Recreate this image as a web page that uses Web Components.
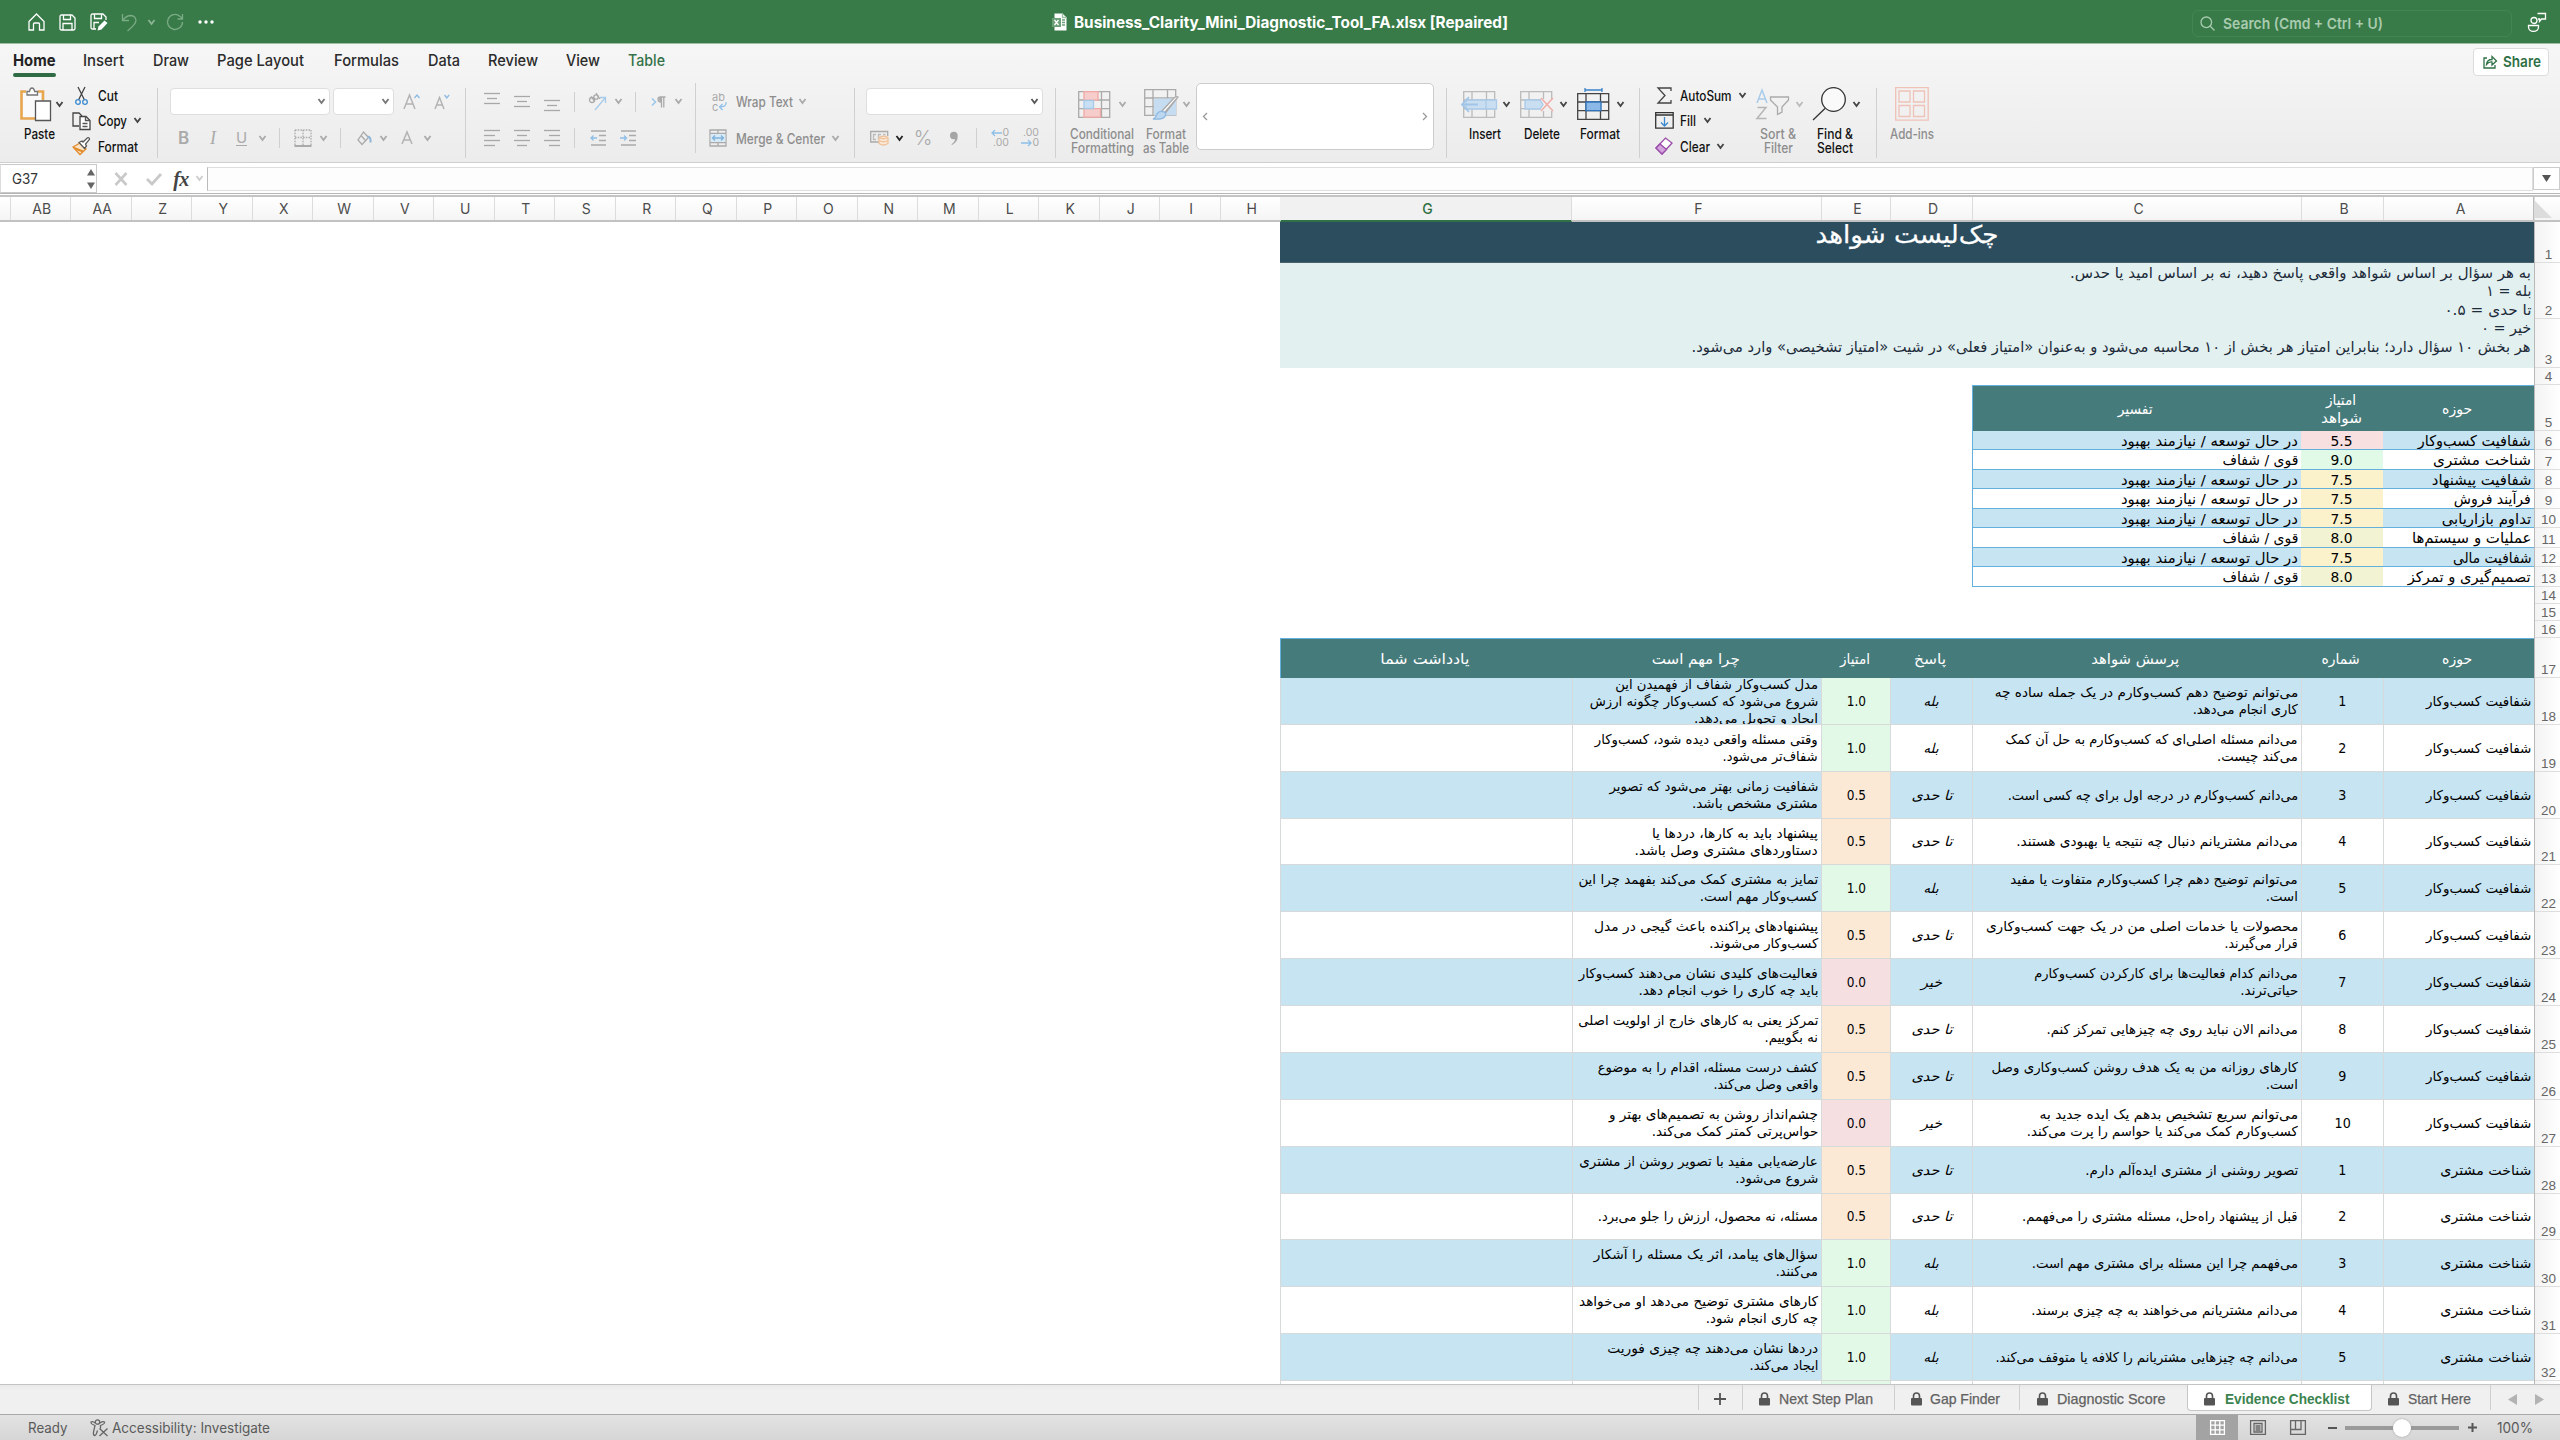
<!DOCTYPE html>
<html lang="fa">
<head>
<meta charset="utf-8">
<title>Business_Clarity_Mini_Diagnostic_Tool_FA.xlsx</title>
<style>
	html, body {
		margin: 0;
		padding: 0;
	}
	body {
		width: 2560px;
		height: 1440px;
		overflow: hidden;
		background: #fff;
		font-family: Inter, "Liberation Sans", sans-serif;
	}
</style>
</head>
<body>
<xl-app></xl-app>
<script>
/* ---------- helpers ---------- */

// text squeezed or stretched to a known width
const t = ( text, w, cls = '' ) => `<fit-text w="${w}" class="${cls}">${text}</fit-text>`

const svg = ( w, h, body, attrs = '' ) =>
	`<svg width="${w}" height="${h}" viewBox="0 0 ${w} ${h}" fill="none" stroke-width="1.3" ${attrs}>${body}</svg>`

const chev = ( color = '#444' ) => svg( 9, 7, `<path d="M1.500 1 4.500 5 7.500 1" stroke="${color}" stroke-width="1.8"/>` )

// horizontal flex row, items are [ left, width, markup ]
const run = ( start, height, items ) => {
	let x = start
	const cells = items.map( ( [ left, w, html ] ) => {
		const cell = `<div class="cell" style="margin-left:${( left - x ).toFixed( 1 )}px;width:${w}px">${html}</div>`
		x = left + w
		return cell
	} )
	return `<div class="run" style="height:${height}px">${cells.join( '' )}</div>`
}

const RUN_CSS = `
	.run { display: flex; align-items: center; }
	.cell { flex: none; display: flex; align-items: center; justify-content: center; }
	svg { display: block; flex: none; overflow: visible; }
`

class FitText extends HTMLElement {
	constructor() {
		super()
		this.attachShadow( { mode: 'open' } )
		this.shadowRoot.innerHTML = `
			<style>
				:host { display: inline-block; white-space: nowrap; flex: none; text-align: start; }
				span { display: inline-block; transform-origin: 0 50%; }
			</style>
			<span><slot></slot></span>
		`
	}

	connectedCallback() {
		const span = this.shadowRoot.querySelector( 'span' )
		const w = parseFloat( this.getAttribute( 'w' ) )
		const natural = span.getBoundingClientRect().width
		this.style.width = w + 'px'
		if ( 'rtl' === getComputedStyle( this ).direction ) {
			span.style.transformOrigin = '100% 50%'
		}
		if ( natural ) {
			span.style.transform = `scaleX(${w / natural})`
		}
	}
}
customElements.define( 'fit-text', FitText )

/* ---------- title bar ---------- */

class XlTitlebar extends HTMLElement {
	connectedCallback() {
		const root = this.attachShadow( { mode: 'open' } )
		const save = '<path d="M1 2.5Q1 1 2.5 1H13l3 3v10.500q0 1.500-1.500 1.500h-12Q1 16 1 14.500zM4.500 1v4.500h7V1M4 16V9.500h9V16"/>'
		root.innerHTML = `
			<style>
				${RUN_CSS}
				:host { display: block; height: 43px; background: #387b48; border-bottom: 1px solid #9cc0a3; color: #fff; }
				.title { font-size: 15.5px; font-weight: 700; }
				.search { box-sizing: border-box; width: 320px; height: 27px; border: 1px solid #438454; border-radius: 6px; color: #a9cbaf; font-size: 15px; font-weight: 600; margin-top: 2px; }
			</style>
			${run( 0, 44, [
				[ 28, 17, svg( 17, 18, '<path d="M1 8.500 8.500 1 16 8.500V17h-4.500v-6q0-1-1-1h-4q-1 0-1 1v6H1z"/>', 'stroke="#fff"' ) ],
				[ 59, 17, svg( 17, 17, save, 'stroke="#fff"' ) ],
				[ 90, 18, svg( 18, 18, '<path d="M6 16H2.500Q1 16 1 14.500v-12Q1 1 2.500 1H13l3 3v3M4.500 1v4.500h7V1M4 16V9.500h5"/><path d="M7.500 17.500 8.500 13.500 14.500 7.500 17.500 10 11.500 16.500z" fill="#fff" stroke="none"/>', 'stroke="#fff"' ) ],
				[ 121, 17, svg( 17, 19, '<path d="M1.500 1v6.500H8M1.500 7.500Q5 3 9 2.500 14.500 2.500 15 7.500 15 11 6.500 18"/>', 'stroke="#7bab85"' ) ],
				[ 147, 9, chev( '#8ab592' ) ],
				[ 166, 18, svg( 18, 18, '<path d="M16.500 9a7.500 7.500 0 1 1-2.700-5.800L16 5M16.500 1v5H11.500"/>', 'stroke="#7bab85"' ) ],
				[ 198, 16, svg( 16, 4, '<circle cx="2" cy="2" r="1.700"/><circle cx="8" cy="2" r="1.700"/><circle cx="14" cy="2" r="1.700"/>', 'style="fill:#fff"' ) ],
				[ 1052, 15, svg( 15, 18, '<path d="M2.500.5h8l4 4v13h-12z" fill="#fff"/><path d="M10.500.5v4h4" stroke="#9cc0a3"/><rect y="5" width="9" height="9" fill="#6da078"/><path d="m2.500 7 4 5m0-5-4 5" stroke="#fff"/><path d="M10 7h3m-3 2.500h3M10 12h3" stroke="#6da078"/>' ) ],
				[ 1073.5, 434, t( 'Business_Clarity_Mini_Diagnostic_Tool_FA.xlsx [Repaired]', 434, 'title' ) ],
				[ 2192, 320, `<div class="search">${run( 1, 25, [
					[ 8, 15, svg( 15, 15, '<circle cx="6.300" cy="6.300" r="5.300"/><path d="m10 10 4.500 4.500"/>', 'stroke="#a9cbaf"' ) ],
					[ 31, 160, t( 'Search (Cmd + Ctrl + U)', 160 ) ]
				] )}</div>` ],
				[ 2527, 20, svg( 20, 20, '<circle cx="7" cy="8.500" r="3"/><path d="M1.500 13.500h10v1.500a4.500 4 0 0 1-10 0zM10.500 1.500h8v5.500h-4L12.500 9.500V7H11"/>', 'stroke="#fff"' ) ]
			] )}
		`
	}
}
customElements.define( 'xl-titlebar', XlTitlebar )

/* ---------- ribbon ---------- */

const bars = ( ...rows ) =>
	svg( 16, rows.length * 5 - 4, rows.map( ( [ x, w ], i ) => `<path d="M${x} ${i * 5 + .5}h${w}"/>` ).join( '' ), 'stroke="#a8a8a8"' )
const cellGrid = stroke => `<path d="M.7.7h31v25.600h-31zM.7 9h31M.7 17.700h31M9 .7v25.600M23.500.7v25.600" stroke="${stroke}"/>`

const ICONS = {
	paste: svg( 31, 34, '<path d="M6 4.500H1.500v27H15M18 4.500h5v9" stroke="#e8a64f" stroke-width="2.600"/><path d="M3 6h18v24H3z" fill="#fafafa"/><path d="M7 8V4.500h2.500Q10 1 12 1t2.700 3.500H17.500V8z" fill="#fff" stroke="#777"/><path d="M15.500 14h15v19.500h-15z" fill="#fff" stroke="#555"/>' ),
	cut: svg( 13, 18, '<path d="m3 0 6.500 13M10 0 3.500 13" stroke="#444"/><circle cx="3" cy="15" r="2.300" stroke="#3b8ad0"/><circle cx="10" cy="15" r="2.300" stroke="#3b8ad0"/>' ),
	copy: svg( 19, 18, '<path d="M7 14H1V1h6l3 3" stroke="#444"/><path d="M8 4.500h6l4 4V17.500H8z" fill="#fff" stroke="#444"/><path d="M13.500 4.500v4h4M10.500 11.500h5m-5 3h5" stroke="#555"/>' ),
	brush: svg( 19, 18, '<path d="m1 10 7-4 6 6-6 5.500z" fill="#fbe3c5" stroke="#e28b2c"/><path d="m2 11 9 3.500" stroke="#e28b2c" stroke-width="2"/><path d="m7 5.500 3-1.500 1 1L15.500.8q2-.5 2 1.500L13.500 7l1 2-2 2.500z" fill="#fff" stroke="#555"/>' ),
	bigA: svg( 17, 17, '<path d="M1 16 6.500 2 12 16M3 11h7" stroke="#b3b3b3" stroke-width="1.500"/><path d="m11.500 5 2.500-3 2.500 3" stroke="#8dbbe3"/>' ),
	smallA: svg( 16, 17, '<path d="M1 16 5.500 4.500 10 16M2.500 12h6" stroke="#b3b3b3" stroke-width="1.500"/><path d="m10.500 2 2.300 3 2.300-3" stroke="#8dbbe3"/>' ),
	borders: svg( 18, 18, '<path d="M1 1h16M1 1v15M17 1v15M9 1v15M1 8.500h16" stroke="#aaa" stroke-dasharray="1.500 1.200"/><path d="M.5 17h17" stroke="#999" stroke-width="1.600"/>' ),
	bucket: svg( 15, 15, '<path d="m6.500 1-5.500 8 4 4.500 6.500-7zM4 4.500 8 9" stroke="#aaa"/><path d="M10.500 5.500q3.500 0 3 6" stroke="#8fb7da" stroke-width="2"/>' ),
	fontA: svg( 12, 14, '<path d="M1 13 6 1l5 12M3 9h6" stroke="#b3b3b3" stroke-width="1.500"/>' ),
	orient: svg( 19, 19, '<path d="m7 18 10-12M12 5.500h5.500V11" stroke="#a6cbe9"/><circle cx="4" cy="8" r="2.500" stroke="#aaa"/><path d="m3 4.500 4 5M8 1l4 6" stroke="#aaa"/><circle cx="8" cy="5" r="2.200" stroke="#aaa"/>' ),
	para: svg( 15, 12, '<path d="m1 2.500 3.500 3.500L1 9.500" stroke="#9cc7ea" stroke-width="1.600"/><path d="M10.500 1a2.500 2.500 0 0 0 0 5z" fill="#aaa"/><path d="M14.500 1H9.500a2.500 2.500 0 0 0 0 5h1M10.500 1v10.500M12.800 1v10.500" stroke="#aaa"/>' ),
	outdent: svg( 17, 16, '<path d="M1 1h15M9 5.500h7M9 10.500h7M1 15h15" stroke="#aaa"/><path d="M1 8h6M3.500 5.500 1 8l2.500 2.500" stroke="#8fbfe6"/>' ),
	indent: svg( 17, 16, '<path d="M1 1h15M9 5.500h7M9 10.500h7M1 15h15" stroke="#aaa"/><path d="M0 8h6M4 5.500 6.500 8 4 10.500" stroke="#8fbfe6"/>' ),
	merge: svg( 18, 18, '<path d="M1 1h16v16H1zM1 4.500h16M1 13.500h16M9 1v3.500M9 13.500V17" stroke="#aaa"/><path d="M1.700 5h14.600v8H1.700z" fill="#d9eaf7"/><path d="M3.500 9h11M6 6.500 3.500 9 6 11.500M12 6.500 14.500 9 12 11.500" stroke="#7fb3dd"/>' ),
	currency: svg( 19, 17, '<path d="M11 12H.7V1.500h17V6" stroke="#aaa"/><path d="M6 4.500H3.500v5H6M11 4.500H8.500v5M13 4.500h2.500" stroke="#bbb"/><path d="M9 7.500v6q4 3 9 0v-6q-4-2.500-9 0zM9 7.500q4 2.500 9 0M9 10.500q4 2.500 9 0" fill="#fbe9d8" stroke="#efc39c"/>' ),
	comma: svg( 10, 15, '<path d="M1 4.500a3.700 3.700 0 1 1 7.700 0Q9 11 3 14l-.5-.7Q6 11 6 8 1 9 1 4.500z" fill="#a5a5a5"/>' ),
	condFmt: svg( 33, 27, `${cellGrid( '#aaa' )}<path d="M6 .7h14v8.500H6zM6 17.700h16.500v8.500H6z" fill="#f6cdcb" stroke="#eea9a5"/><path d="M6 9.500h9.500v8H6z" fill="#c9dff3" stroke="#a7c9e8"/>` ),
	tableFmt: svg( 35, 32, `<g transform="translate(0 1)">${cellGrid( '#aaa' )}<path d="M10 9.500h22v17H10z" fill="#c6dcf1"/></g><path d="m34 9-13 15M34 9q-2-1-4 1L18 23l3 2.500z" fill="#fff" stroke="#aaa"/><path d="M19 23.500q4 1 2 5-3 3.500-12 2.500 3-1 3.500-4 2-4.500 6.500-3.500z" fill="#bcd7f0" stroke="#8fb9df"/>` ),
	insert: svg( 36, 27, `<g transform="translate(2)">${cellGrid( '#bbb' )}</g><path d="M5 9h30.500v9H5z" fill="#c9def1" stroke="#a9cae8"/><path d="M25 9v9" stroke="#a9cae8"/><path d="M1 13.500h16M8 6 1 13.500 8 21" stroke="#a0c5e8" stroke-width="1.800"/>` ),
	del: svg( 34, 27, `${cellGrid( '#bbb' )}<path d="M21 8h13v12H21z" fill="#f1f1f1"/><path d="M5 9h15l3 4.500-3 4.500H5z" fill="#c9def1" stroke="#a9cae8"/><path d="m21 7 12 13M33 7 21 20" stroke="#efaea9" stroke-width="1.500"/>` ),
	format: svg( 33, 32, `<path d="M8 2h17M8 0v4M25 0v4" stroke="#3b83c8"/><g transform="translate(0 5)">${cellGrid( '#444' )}<path d="M9 9h15v8.700H9z" fill="#8bb8e6" stroke="#2f75bd"/></g>` ),
	sigma: svg( 15, 17, '<path d="M14 4V1H1l7 7.500L1 16h13v-3" stroke="#444"/>' ),
	fill: svg( 19, 17, '<path d="M.7.7h17.500v15.500H.7zM.7 3h17.500" stroke="#333"/><path d="M9.500 5v9M6 10.500 9.500 14l3.500-3.500" stroke="#3b8ad0"/>' ),
	clear: svg( 18, 18, '<path d="M1 11 10.500 1 17 6 7 17z" fill="#fff" stroke="#9a4aa9"/><path d="m1 11 4-4 6.500 5.500L7 17z" fill="#d3a4dc" stroke="#9a4aa9"/>' ),
	sort: svg( 33, 31, '<path d="M1 14 6 1l5 13M2.500 10h7" stroke="#a9cbea" stroke-width="1.500"/><path d="M1.500 18.500H10L1 29.500h9.500" stroke="#b5b5b5" stroke-width="1.500"/><path d="M14.500 8h18v3l-6.500 7v5l-4.500 2.500V18l-7-7z" stroke="#aaa"/>' ),
	find: svg( 34, 34, '<circle cx="21.500" cy="12.500" r="11.800" stroke="#333" fill="#fafafa"/><path d="M13 21.500 1 33" stroke="#333"/>' ),
	addins: svg( 34, 34, '<path d="M.7.7h32.500v32.500H.7zM4 4h11v11H4zM18.500 4h11v11h-11zM4 18.500h11v11H4zM18.500 18.500h11v11h-11z" stroke="#eec2b7"/>' )
}

const TABS = [
	[ 13, 42.5, 'Home' ], [ 82.5, 41, 'Insert' ], [ 152.5, 36, 'Draw' ], [ 216.5, 87, 'Page Layout' ],
	[ 333.5, 65, 'Formulas' ], [ 428, 32, 'Data' ], [ 487.5, 50, 'Review' ], [ 565.5, 34, 'View' ], [ 627.5, 37, 'Table' ]
]

class XlRibbon extends HTMLElement {
	connectedCallback() {
		this.attachShadow( { mode: 'open' } )
		this.shadowRoot.innerHTML = this.render()
	}

	stack( ...rows ) {
		return `<div class="stack">${rows.join( '' )}</div>`
	}

	// large icon with one or two lines below, room for the chevron on its right
	big( icon, lines, room = 0, cls = '' ) {
		return `<div class="big ${cls}"><div class="pic" style="padding-right:${room}px">${icon}</div>${lines.map( ( [ s, w ] ) => `<div>${t( s, w )}</div>` ).join( '' )}</div>`
	}

	sep( h, cls = '' ) {
		return `<div class="sep ${cls}" style="height:${h}px"></div>`
	}

	render() {
		const small = this.sep( 20 )
		const long = this.sep( 70, 'long' )
		const a = [ 0, 16 ], b = [ 3, 10 ]
		return `
			<style>
				${RUN_CSS}
				:host { display: block; height: 118px; background: linear-gradient(#f6f6f6, #ececec); border-bottom: 1px solid #cfcfcf; color: #111; font-size: 14px; font-weight: 500; }
				.tabs { font-size: 15.500px; color: #2b2b2b; }
				.tabs fit-text { line-height: 32px; }
				.tab { display: flex; flex-direction: column; margin-top: -5px; }
				.tab::after { content: ""; height: 3.500px; border-radius: 2px; margin-top: -4px; }
				.tab.on { font-weight: 700; color: #222; }
				.tab.on::after { background: #2f6c45; }
				.tab.green { color: #35724a; }
				.bar { display: flex; }
				.bar > .run { align-items: flex-start; }
				.stack { width: 100%; display: flex; flex-direction: column; }
				.gap5 { height: 5px; }
				.gap13 { height: 13px; }
				.sep { width: 1px; background: #d0d0d0; }
				.sep.long { margin-top: 5px; }
				.field { box-sizing: border-box; width: 100%; height: 27px; background: #fff; border: 1px solid #dedede; border-radius: 4px; display: flex; align-items: center; justify-content: flex-end; padding-right: 3px; }
				.gallery { box-sizing: border-box; width: 238px; height: 67px; background: #fff; border: 1.500px solid #ccc; border-radius: 5px; display: flex; align-items: center; justify-content: space-between; padding: 0 5px; }
				.big { display: flex; flex-direction: column; align-items: center; line-height: 14px; }
				.big > div { height: 14px; display: flex; align-items: center; }
				.big > .pic { box-sizing: border-box; height: 44px; padding-bottom: 2px; }
				.dim { color: #8d8d8d; }
				.ch { padding-top: 18px; }
				.glyph { color: #aaa; font-size: 17px; font-weight: 600; line-height: 20px; }
				.glyph.i { font-family: "Liberation Serif", serif; font-style: italic; font-weight: 400; font-size: 18px; }
				.glyph.u { font-weight: 400; font-size: 15px; border-bottom: 1.500px solid #aaa; line-height: 15px; }
				.glyph.p { font-weight: 300; font-size: 20px; }
				.dec { font-size: 10.500px; line-height: 10px; color: #aaa; width: 19px; text-align: right; font-weight: 400; }
				.abc { font-size: 11px; line-height: 10px; color: #aaa; font-weight: 400; width: 16px; }
				.abc div, .dec div { height: 10px; display: flex; align-items: center; }
				.dec div { justify-content: flex-end; }
				.share { box-sizing: border-box; width: 76px; height: 28px; background: #fff; border: 1px solid #dcdcdc; border-radius: 4px; display: flex; align-items: center; gap: 6px; padding-left: 9px; color: #2f7044; font-weight: 600; font-size: 15px; margin-top: -3px; }
			</style>
			<div class="tabs">${run( 0, 39, [
				...TABS.map( ( [ x, w, s ], i ) => [ x, w, `<div class="tab ${0 === i ? 'on' : 8 === i ? 'green' : ''}">${t( s, w )}</div>` ] ),
				[ 2473, 76, `<div class="share">${svg( 14, 14, '<path d="M4 3H1v10h11v-3M3.500 9.500Q4 4.500 9 4.500V1.500L13.500 6 9 10V7q-3-.5-5.500 2.500z"/>', 'stroke="#2f7044"' )}${t( 'Share', 38 )}</div>` ]
			] )}</div>
			<div class="bar">${run( 0, 79, [
				[ 18, 42, this.big( ICONS.paste, [ [ 'Paste', 31 ] ], 7 ) ],
				[ 55, 9, `<div class="ch">${chev()}</div>` ],
				[ 72, 84, this.stack(
					run( 72, 25.3, [ [ 75, 13, ICONS.cut ], [ 98, 20, t( 'Cut', 20 ) ] ] ),
					run( 72, 25.3, [ [ 72, 19, ICONS.copy ], [ 98, 29, t( 'Copy', 29 ) ], [ 133, 9, chev() ] ] ),
					run( 72, 25.3, [ [ 72, 19, ICONS.brush ], [ 98, 40, t( 'Format', 40 ) ] ] )
				) ],
				[ 157, 1, long ],
				[ 160, 300, this.stack(
					'<div class="gap5"></div>',
					run( 160, 27, [
						[ 170, 160, `<div class="field">${chev( '#777' )}</div>` ],
						[ 333, 61, `<div class="field">${chev( '#777' )}</div>` ],
						[ 403, 17, ICONS.bigA ], [ 434, 16, ICONS.smallA ]
					] ),
					'<div class="gap13"></div>',
					run( 160, 20, [
						[ 178, 11, '<span class="glyph">B</span>' ], [ 208, 10, '<span class="glyph i">I</span>' ],
						[ 236, 11, '<span class="glyph u">U</span>' ], [ 258, 9, chev( '#aaa' ) ], [ 279, 1, small ],
						[ 294, 18, ICONS.borders ], [ 319, 9, chev( '#aaa' ) ], [ 340, 1, small ],
						[ 357, 15, ICONS.bucket ], [ 379, 9, chev( '#aaa' ) ], [ 401, 12, ICONS.fontA ], [ 423, 9, chev( '#aaa' ) ]
					] )
				) ],
				[ 465, 1, long ],
				[ 470, 220, this.stack(
					'<div class="gap5"></div>',
					run( 470, 27, [
						[ 483.5, 16, `<div style="padding-bottom:7px">${bars( a, b, a )}</div>` ],
						[ 513.5, 16, bars( a, b, a ) ],
						[ 543.5, 16, `<div style="padding-top:8px">${bars( a, b, a )}</div>` ],
						[ 574, 1, small ], [ 588, 19, ICONS.orient ], [ 614, 9, chev( '#aaa' ) ],
						[ 635, 1, small ], [ 651, 15, ICONS.para ], [ 674, 9, chev( '#aaa' ) ]
					] ),
					'<div class="gap13"></div>',
					run( 470, 20, [
						[ 483.5, 16, bars( [ 0, 16 ], [ 0, 11 ], [ 0, 16 ], [ 0, 11 ] ) ],
						[ 513.5, 16, bars( a, b, a, b ) ],
						[ 543.5, 16, bars( [ 0, 16 ], [ 5, 11 ], [ 0, 16 ], [ 5, 11 ] ) ],
						[ 574, 1, small ], [ 590, 17, ICONS.outdent ], [ 619.5, 17, ICONS.indent ]
					] )
				) ],
				[ 695, 1, this.sep( 70 ) ],
				[ 700, 150, this.stack(
					'<div class="gap5"></div>',
					run( 700, 27, [ [ 712, 16, `<div class="abc"><div>ab</div><div>c${svg( 9, 9, '<path d="M8 0q1 5-6.500 5M4.500 2 1.500 5l3 3" stroke="#8fc0e8"/>' )}</div></div>` ], [ 736, 57, t( 'Wrap Text', 57, 'dim' ) ], [ 798, 9, chev( '#aaa' ) ] ] ),
					'<div class="gap13"></div>',
					run( 700, 20, [ [ 709, 18, ICONS.merge ], [ 736, 89, t( 'Merge &amp; Center', 89, 'dim' ) ], [ 831, 9, chev( '#aaa' ) ] ] )
				) ],
				[ 854, 1, long ],
				[ 858, 190, this.stack(
					'<div class="gap5"></div>',
					run( 858, 27, [ [ 866, 177, `<div class="field">${chev( '#555' )}</div>` ] ] ),
					'<div class="gap13"></div>',
					run( 858, 20, [
						[ 870, 19, ICONS.currency ], [ 895, 9, chev( '#222' ) ], [ 914, 18, '<span class="glyph p">%</span>' ],
						[ 949, 10, ICONS.comma ], [ 976, 1, small ],
						[ 990, 19, `<div class="dec"><div>${svg( 11, 8, '<path d="M11 4H1M4 1 1 4l3 3" stroke="#8fc0e8"/>' )}0</div><div>.00</div></div>` ],
						[ 1020, 19, `<div class="dec"><div>.00</div><div>${svg( 11, 8, '<path d="M0 4h10M7 1l3 3-3 3" stroke="#8fc0e8"/>' )}0</div></div>` ]
					] )
				) ],
				[ 1055, 1, long ],
				[ 1069, 66, this.big( ICONS.condFmt, [ [ 'Conditional', 64 ], [ 'Formatting', 63 ] ], 16, 'dim' ) ],
				[ 1117.5, 9, `<div class="ch">${chev( '#aaa' )}</div>` ],
				[ 1142, 48, this.big( ICONS.tableFmt, [ [ 'Format', 40 ], [ 'as Table', 46 ] ], 10, 'dim' ) ],
				[ 1182, 9, `<div class="ch">${chev( '#aaa' )}</div>` ],
				[ 1196, 238, '<div class="gallery">' + svg( 6, 9, '<path d="M5 1 1.500 4.500 5 8"/>', 'stroke="#999"' ) + svg( 6, 9, '<path d="m1 1 3.500 3.500L1 8"/>', 'stroke="#999"' ) + '</div>' ],
				[ 1446, 1, long ],
				[ 1461, 48, this.big( ICONS.insert, [ [ 'Insert', 32 ] ], 12 ) ],
				[ 1502, 9, `<div class="ch">${chev()}</div>` ],
				[ 1520, 44, this.big( ICONS.del, [ [ 'Delete', 36 ] ], 10 ) ],
				[ 1559, 9, `<div class="ch">${chev()}</div>` ],
				[ 1577, 45, this.big( ICONS.format, [ [ 'Format', 40 ] ], 12 ) ],
				[ 1616, 9, `<div class="ch">${chev()}</div>` ],
				[ 1639, 1, long ],
				[ 1650, 100, this.stack(
					run( 1650, 25.3, [ [ 1657, 15, ICONS.sigma ], [ 1680, 51.5, t( 'AutoSum', 51.5 ) ], [ 1738, 9, chev() ] ] ),
					run( 1650, 25.3, [ [ 1655, 19, ICONS.fill ], [ 1680, 16, t( 'Fill', 16 ) ], [ 1702.5, 9, chev() ] ] ),
					run( 1650, 25.3, [ [ 1655, 18, ICONS.clear ], [ 1680, 30, t( 'Clear', 30 ) ], [ 1716, 9, chev() ] ] )
				) ],
				[ 1756, 44, this.big( ICONS.sort, [ [ 'Sort &amp;', 36 ], [ 'Filter', 29 ] ], 12, 'dim' ) ],
				[ 1795, 9, `<div class="ch">${chev( '#bbb' )}</div>` ],
				[ 1812, 46, this.big( ICONS.find, [ [ 'Find &amp;', 36 ], [ 'Select', 36 ] ], 13 ) ],
				[ 1852, 9, `<div class="ch">${chev()}</div>` ],
				[ 1876, 1, long ],
				[ 1890, 44, this.big( ICONS.addins, [ [ 'Add-ins', 44 ] ], 0, 'dim' ) ]
			] )}</div>
		`
	}
}
customElements.define( 'xl-ribbon', XlRibbon )

/* ---------- formula bar ---------- */

class XlFormulaBar extends HTMLElement {
	connectedCallback() {
		this.attachShadow( { mode: 'open' } ).innerHTML = `
			<style>
				${RUN_CSS}
				:host { display: block; box-sizing: border-box; height: 34px; background: #fff; border-bottom: 2px solid #c4c4c4; }
				.wrap { height: 30px; border-bottom: 1px solid #b5b5b5; }
				.name { box-sizing: border-box; width: 97px; height: 29px; border: 1px solid #c9c9c9; border-left-color: #ddd; font-size: 14.500px; color: #333; }
				.fx { font: italic 700 20px "Liberation Serif", serif; color: #444; letter-spacing: -.5px; line-height: 22px; }
				.input { box-sizing: border-box; width: 2326px; height: 24px; background: #fdfdfd; border: 1px solid #dedede; border-left-color: #bbb; }
				.drop { box-sizing: border-box; width: 27px; height: 23px; border: 1px solid #ccc; display: flex; align-items: center; justify-content: center; }
			</style>
			<div class="wrap">${run( 0, 31, [
				[ 0, 97, `<div class="name">${run( 1, 27, [
					[ 12, 26, t( 'G37', 26 ) ],
					[ 87, 8, svg( 8, 20, '<path d="M0 6.500 4 0l4 6.500zM0 13.500 4 20l4-6.500z" fill="#666"/>' ) ]
				] )}</div>` ],
				[ 114, 14, svg( 14, 12, '<path d="m1.500 0 11 12M12.500 0l-11 12" stroke="#c9c9c9" stroke-width="2.600"/>' ) ],
				[ 146, 16, svg( 16, 12, '<path d="m1 6 5 5L15 1" stroke="#c9c9c9" stroke-width="2.800"/>' ) ],
				[ 172, 18, '<span class="fx">fx</span>' ],
				[ 195, 9, chev( '#ccc' ) ],
				[ 206.5, 2326, '<div class="input"></div>' ],
				[ 2532.5, 27, `<div class="drop">${svg( 9, 7, '<path d="M0 0h9L4.500 7z" fill="#555"/>' )}</div>` ]
			] )}</div>
		`
	}
}
customElements.define( 'xl-formula-bar', XlFormulaBar )

/* ---------- sheet ---------- */

// right to left: A .. G, then the blank columns
const COLS = { A: 151, B: 82, C: 329, D: 82, E: 69, F: 249, G: 292 }
const BLANK = 'H I J K L M N O P Q R S T U V W X Y Z AA AB'.split( ' ' )

// bottom edge of each row, the first entry is the top of row 1
const EDGES = [ 222, 263, 319, 368, 385, 431, 450, 470, 489, 509, 528, 548, 567, 587, 604, 621, 638 ]
for ( let i = 0; i < 16; i++ ) {
	EDGES.push( Math.round( 678 + i * 46.87 ) )
}
const height = row => EDGES[ row ] - EDGES[ row - 1 ]

const DEV = [ 'در حال توسعه / نیازمند بهبود', 177 ]
const STRONG = [ 'قوی / شفاف', 76 ]
const SUMMARY = [
	[ 'شفافیت کسب‌وکار', 113, '5.5', '#f8e0e1', DEV ],
	[ 'شناخت مشتری', 98, '9.0', '#e1f9e7', STRONG ],
	[ 'شفافیت پیشنهاد', 99.5, '7.5', '#fbf1cb', DEV ],
	[ 'فرآیند فروش', 77, '7.5', '#fbf1cb', DEV ],
	[ 'تداوم بازاریابی', 89.5, '7.5', '#fbf1cb', DEV ],
	[ 'عملیات و سیستم‌ها', 119.5, '8.0', '#f2f3d2', STRONG ],
	[ 'شفافیت مالی', 78.5, '7.5', '#fbf1cb', DEV ],
	[ 'تصمیم‌گیری و تمرکز', 123, '8.0', '#f2f3d2', STRONG ]
]

const BIZ = [ 'شفافیت کسب‌وکار', 105.5 ]
const CUST = [ 'شناخت مشتری', 91 ]
const ANSWERS = {
	1: [ 'بله', 15, '1.0', '#e2f9e7' ],
	.5: [ 'تا حدی', 41, '0.5', '#fbe9d6' ],
	0: [ 'خیر', 21, '0.0', '#f6dfe1' ]
}
const QUESTIONS = [
	[ BIZ, 1, [ [ 'می‌توانم توضیح دهم کسب‌وکارم در یک جمله ساده چه', 303.5 ], [ 'کاری انجام می‌دهد.', 105 ] ], 1,
		[ [ 'مدل کسب‌وکار شفاف از فهمیدن این', 203 ], [ 'شروع می‌شود که کسب‌وکار چگونه ارزش', 228.5 ], [ 'ایجاد و تحویل می‌دهد.', 124 ] ] ],
	[ BIZ, 2, [ [ 'می‌دانم مسئله اصلی‌ای که کسب‌وکارم به حل آن کمک', 292 ], [ 'می‌کند چیست.', 81 ] ], 1,
		[ [ 'وقتی مسئله واقعی دیده شود، کسب‌وکار', 223 ], [ 'شفاف‌تر می‌شود.', 95 ] ] ],
	[ BIZ, 3, [ [ 'می‌دانم کسب‌وکارم در درجه اول برای چه کسی است.', 290.5 ] ], .5,
		[ [ 'شفافیت زمانی بهتر می‌شود که تصویر', 209 ], [ 'مشتری مشخص باشد.', 126 ] ] ],
	[ BIZ, 4, [ [ 'می‌دانم مشتریانم دنبال چه نتیجه یا بهبودی هستند.', 281.5 ] ], .5,
		[ [ 'پیشنهاد باید به کارها، دردها یا', 166 ], [ 'دستاوردهای مشتری وصل باشد.', 183 ] ] ],
	[ BIZ, 5, [ [ 'می‌توانم توضیح دهم چرا کسب‌وکارم متفاوت یا مفید', 287.5 ], [ 'است.', 32 ] ], 1,
		[ [ 'تمایز به مشتری کمک می‌کند بفهمد چرا این', 240 ], [ 'کسب‌وکار مهم است.', 118 ] ] ],
	[ BIZ, 6, [ [ 'محصولات یا خدمات اصلی من در یک جهت کسب‌وکاری', 312.5 ], [ 'قرار می‌گیرند.', 73 ] ], .5,
		[ [ 'پیشنهادهای پراکنده باعث گیجی در مدل', 224 ], [ 'کسب‌وکار می‌شوند.', 109 ] ] ],
	[ BIZ, 7, [ [ 'می‌دانم کدام فعالیت‌ها برای کارکردن کسب‌وکارم', 263.5 ], [ 'حیاتی‌ترند.', 58 ] ], 0,
		[ [ 'فعالیت‌های کلیدی نشان می‌دهند کسب‌وکار', 239 ], [ 'باید چه کاری را خوب انجام دهد.', 180 ] ] ],
	[ BIZ, 8, [ [ 'می‌دانم الان نباید روی چه چیزهایی تمرکز کنم.', 251.5 ] ], .5,
		[ [ 'تمرکز یعنی به کارهای خارج از اولویت اصلی', 240 ], [ 'نه بگوییم.', 53.5 ] ] ],
	[ BIZ, 9, [ [ 'کارهای روزانه من به یک هدف روشن کسب‌وکاری وصل', 306.5 ], [ 'است.', 32 ] ], .5,
		[ [ 'کشف درست مسئله، اقدام را به موضوع', 220 ], [ 'واقعی وصل می‌کند.', 105 ] ] ],
	[ BIZ, 10, [ [ 'می‌توانم سریع تشخیص بدهم یک ایده جدید به', 258.5 ], [ 'کسب‌وکارم کمک می‌کند یا حواسم را پرت می‌کند.', 271 ] ], 0,
		[ [ 'چشم‌انداز روشن به تصمیم‌های بهتر و', 209 ], [ 'حواس‌پرتی کمتر کمک می‌کند.', 166.5 ] ] ],
	[ CUST, 1, [ [ 'تصویر روشنی از مشتری ایده‌آلم دارم.', 213 ] ], .5,
		[ [ 'عارضه‌یابی مفید با تصویر روشن از مشتری', 238.5 ], [ 'شروع می‌شود.', 83 ] ] ],
	[ CUST, 2, [ [ 'قبل از پیشنهاد راه‌حل، مسئله مشتری را می‌فهمم.', 275.5 ] ], .5,
		[ [ 'مسئله، نه محصول، ارزش را جلو می‌برد.', 220 ] ] ],
	[ CUST, 3, [ [ 'می‌فهمم چرا این مسئله برای مشتری مهم است.', 266.5 ] ], 1,
		[ [ 'سؤال‌های پیامد، اثر یک مسئله را آشکار', 224 ], [ 'می‌کنند.', 42 ] ] ],
	[ CUST, 4, [ [ 'می‌دانم مشتریانم می‌خواهند به چه چیزی برسند.', 266.5 ] ], 1,
		[ [ 'کارهای مشتری توضیح می‌دهد او می‌خواهد', 239 ], [ 'چه کاری انجام شود.', 112.5 ] ] ],
	[ CUST, 5, [ [ 'می‌دانم چه چیزهایی مشتریانم را کلافه یا متوقف می‌کند.', 302.5 ] ], 1,
		[ [ 'دردها نشان می‌دهند چه چیزی فوریت', 211 ], [ 'ایجاد می‌کند.', 69 ] ] ]
]

class XlSheet extends HTMLElement {
	connectedCallback() {
		this.attachShadow( { mode: 'open' } )
		this.shadowRoot.innerHTML = this.render()
	}

	cell( col, html, cls = '', bg = '' ) {
		return `<div class="c ${cls}" style="width:${COLS[ col ]}px;${bg ? `background:${bg}` : ''}">${html}</div>`
	}

	lines( list ) {
		return list.map( ( [ s, w ] ) => t( s, w ) ).join( '' )
	}

	row( n, cls, html ) {
		return `<div class="r ${cls}" style="height:${height( n )}px">${html}</div>`
	}

	header() {
		const letters = [ ...BLANK ].reverse().map( l => `<div class="h" style="width:60.500px">${l}</div>` ).join( '' )
		const cols = Object.keys( COLS ).reverse().map( l => `<div class="h ${'G' === l ? 'on' : ''}" style="width:${COLS[ l ]}px">${l}</div>` ).join( '' )
		return `<div class="head"><div class="h first"></div>${letters}${cols}<div class="corner">${svg( 17, 17, '<path d="M0 0 17 17H0z" fill="#dcdcdc"/>' )}</div></div>`
	}

	summary() {
		const top = this.row( 5, 'th sum', this.cell( 'A', t( 'حوزه', 30 ) ) + this.cell( 'B', t( 'امتیاز', 30 ) + t( 'شواهد', 41 ) ) + this.cell( 'C', t( 'تفسیر', 35 ) ) )
		return top + SUMMARY.map( ( [ name, w, score, color, verdict ], i ) => this.row( 6 + i, `sum s ${i % 2 ? '' : 'band'}`,
			this.cell( 'A', t( name, w ), 'start' ) + this.cell( 'B', t( score, 22 ), '', color ) + this.cell( 'C', t( ...verdict ), 'start' )
		) ).join( '' )
	}

	questions() {
		const names = { A: [ 'حوزه', 30 ], B: [ 'شماره', 38 ], C: [ 'پرسش شواهد', 88 ], D: [ 'پاسخ', 32 ], E: [ 'امتیاز', 30 ], F: [ 'چرا مهم است', 88 ], G: [ 'یادداشت شما', 89 ] }
		const top = this.row( 17, 'th q17', Object.entries( names ).map( ( [ col, v ] ) => this.cell( col, t( ...v ) ) ).join( '' ) )
		return top + QUESTIONS.map( ( [ area, n, text, score, why ], i ) => {
			const [ ans, w, num, color ] = ANSWERS[ score ]
			return this.row( 18 + i, `q ${i % 2 ? '' : 'band'}`,
				this.cell( 'A', t( ...area ), 'start' ) + this.cell( 'B', t( n, n > 9 ? 16.2 : 8.1 ), 'num' ) + this.cell( 'C', this.lines( text ), 'start' ) +
				this.cell( 'D', t( ans, w, 'slant' ) ) + this.cell( 'E', t( num, 19.3 ), 'num', color ) + this.cell( 'F', this.lines( why ), 'start' ) + this.cell( 'G', '' ) )
		} ).join( '' ) + `<div class="r q rest">${Object.keys( COLS ).map( c => this.cell( c, '', '', 'E' === c ? '#e2f9e7' : '' ) ).join( '' )}</div>`
	}

	render() {
		return `
			<style>
				:host { display: block; height: 1187px; overflow: hidden; background: #fff; color: #000; font-family: "DejaVu Sans", sans-serif; }
				.head { display: flex; height: 23px; border-bottom: 2px solid #c2c2c2; background: linear-gradient(#fff, #f5f5f5); font: 400 14px Inter, sans-serif; color: #4c4c4c; }
				.h { box-sizing: border-box; flex: none; height: 23px; line-height: 24px; text-align: center; border-right: 1px solid #dcdcdc; padding-left: 3px; }
				.h.first { width: 10.500px; }
				.h.on { color: #2f7044; background: #f1f1f1; height: 25px; border-bottom: 2px solid #2f7044; font-weight: 500; margin-left: -1px; border-left: 1px solid #f1f1f1; }
				.h.on + .h { margin-left: 1px; }
				.h.on ~ .h { position: static; }
				.corner { flex: 1; display: flex; align-items: flex-end; padding: 0 0 2px 1px; border-left: 1px solid #bbb; margin-left: -2px; }
				.body { display: flex; }
				.blank { width: 1280px; }
				.grid { width: 1254px; direction: rtl; overflow: hidden; height: 1162px; }
				.rows { flex: 1; box-sizing: border-box; border-left: 1px solid #b9b9b9; background: linear-gradient(90deg, #f3f3f3, #fff); font: 13.500px "Liberation Sans", sans-serif; color: #666; height: 1162px; overflow: hidden; }
				.n { box-sizing: border-box; display: flex; align-items: flex-end; justify-content: center; padding-left: 2px; border-bottom: 1px solid #dedede; line-height: 15px; }
				.title { box-sizing: border-box; height: 41px; background: #2c4d5e; color: #fff; text-align: center; font-size: 24.500px; line-height: 25px; border-bottom: 1px solid #46626f; -webkit-text-stroke: .25px; }
				.intro { box-sizing: border-box; height: 105px; background: #e2f0f0; color: #1d2b3a; font-size: 15px; line-height: 18.400px; padding: 1px 3px 0 0; display: flex; flex-direction: column; align-items: flex-start; }
				.r { display: flex; }
				.c { box-sizing: border-box; flex: none; display: flex; flex-direction: column; align-items: center; justify-content: center; overflow: hidden; line-height: 17px; height: 100%; }
				.c.start { align-items: flex-start; padding-right: 3px; }
				.th { background: #467b7c; color: #fff; font-size: 14.500px; }
				.th .c { line-height: 18px; padding-right: 2px; }
				.sum { box-sizing: border-box; width: 562px; border-left: 1px solid #63b0dd; }
				.sum.s { border-bottom: 1px solid #63b0dd; font-size: 14.800px; }
				.sum.th { border-top: 1px solid #63b0dd; }
				.band { background: #c7e4f2; }
				.q { font-size: 13.600px; }
				.q .num { font-size: 13.200px; }
				.q .c { border-left: 1px solid #d6dadb; border-bottom: 1px solid #d6dadb; }
				.q17 { box-sizing: border-box; border-top: 1px solid #63b0dd; border-left: 1px solid #63b0dd; }
				.slant { font-style: italic; }
				.rest { height: 10px; }
			</style>
			${this.header()}
			<div class="body">
				<div class="blank"></div>
				<div class="grid">
					<div class="title">${t( 'چک‌لیست شواهد', 183 )}</div>
					<div class="intro">
						${t( 'به هر سؤال بر اساس شواهد واقعی پاسخ دهید، نه بر اساس امید یا حدس.', 461 )}
						${t( 'بله = ۱', 45 )}
						${t( 'تا حدی = ۰.۵', 87 )}
						${t( 'خیر = ۰', 50 )}
						${t( 'هر بخش ۱۰ سؤال دارد؛ بنابراین امتیاز هر بخش از ۱۰ محاسبه می‌شود و به‌عنوان «امتیاز فعلی» در شیت «امتیاز تشخیصی» وارد می‌شود.', 839 )}
					</div>
					<div style="height:${height( 4 )}px"></div>
					${this.summary()}
					<div style="height:${EDGES[ 16 ] - EDGES[ 13 ]}px"></div>
					${this.questions()}
				</div>
				<div class="rows">${EDGES.slice( 1 ).map( ( e, i ) => `<div class="n" style="height:${height( i + 1 )}px">${i + 1}</div>` ).join( '' )}</div>
			</div>
		`
	}
}
customElements.define( 'xl-sheet', XlSheet )

/* ---------- sheet tabs and status bar ---------- */

class XlSheetTabs extends HTMLElement {
	connectedCallback() {
		const lock = svg( 11, 14, '<path d="M2.500 7V4a3 3 0 0 1 6 0v3" stroke="#555" stroke-width="1.600"/><rect y="6" width="11" height="7.500" rx="1" fill="#555"/>' )
		const line = '<div class="line"></div>'
		this.attachShadow( { mode: 'open' } ).innerHTML = `
			<style>
				${RUN_CSS}
				:host { display: block; box-sizing: border-box; height: 30px; background: linear-gradient(#e9e9e9, #f0f0f0 5px); border-top: 1px solid #c4c4c4; font: 14.500px "Liberation Sans", sans-serif; color: #626262; -webkit-text-stroke: .25px; }
				.line { width: 1px; height: 25px; margin-bottom: 4px; background: #cfcfcf; }
				.on { box-sizing: border-box; width: 185px; height: 26px; margin-bottom: 3px; background: #fff; border: 1px solid #c6c6c6; border-top: 0; border-radius: 0 0 4px 4px; color: #3c8350; font-weight: 700; -webkit-text-stroke: 0; }
			</style>
			${run( 0, 28, [
				[ 1698, 1, line ],
				[ 1714, 12, svg( 12, 12, '<path d="M6 0v12M0 6h12" stroke="#555" stroke-width="1.800"/>' ) ],
				[ 1742, 1, line ], [ 1759, 11, lock ], [ 1779, 94, t( 'Next Step Plan', 94 ) ],
				[ 1894, 1, line ], [ 1911, 11, lock ], [ 1930, 70, t( 'Gap Finder', 70 ) ],
				[ 2019, 1, line ], [ 2037, 11, lock ], [ 2057, 108.5, t( 'Diagnostic Score', 108.5 ) ],
				[ 2187, 185, `<div class="on">${run( 1, 28, [ [ 17, 11, lock ], [ 38, 124.5, t( 'Evidence Checklist', 124.5 ) ] ] )}</div>` ],
				[ 2388, 11, lock ], [ 2408, 63, t( 'Start Here', 63 ) ], [ 2490, 1, line ],
				[ 2508, 9, svg( 9, 11, '<path d="M9 0v11L0 5.500z" fill="#b3b3b3"/>' ) ],
				[ 2535, 9, svg( 9, 11, '<path d="M0 0v11l9-5.500z" fill="#b3b3b3"/>' ) ]
			] )}
		`
	}
}
customElements.define( 'xl-sheet-tabs', XlSheetTabs )

class XlStatus extends HTMLElement {
	connectedCallback() {
		this.attachShadow( { mode: 'open' } ).innerHTML = `
			<style>
				${RUN_CSS}
				:host { display: block; box-sizing: border-box; height: 26px; background: linear-gradient(#e2e2e2, #d6d6d6); border-top: 1px solid #a9a9a9; font-size: 14px; color: #5a5a5a; }
				.view { width: 42px; height: 25px; background: #a3a3a3; display: flex; align-items: center; justify-content: center; }
				.zoom { width: 114px; height: 18px; display: flex; align-items: center; justify-content: center; background: linear-gradient(#9a9a9a, #9a9a9a) center / 100% 4px no-repeat; }
				.knob { width: 18px; height: 18px; border-radius: 50%; background: #fff; box-shadow: 0 0 2px #999; }
			</style>
			${run( 0, 25, [
				[ 28, 39.5, t( 'Ready', 39.5 ) ],
				[ 90, 18, svg( 18, 18, '<circle cx="7.500" cy="3" r="2.200"/><path d="M5 4Q3 2 1 3q-.5 2 4 3.500L3.500 13q-.5 3.500 1.500 3.500 1 0 2.500-5M10 4q3-2 4.500-1Q15 5 10.500 6.500v3M9.500 9.500l8 7.500m0-7.500-8 7.500"/>', 'stroke="#666"' ) ],
				[ 112, 158, t( 'Accessibility: Investigate', 158 ) ],
				[ 2196, 42, `<div class="view">${svg( 15, 15, '<path d="M.6.6h13.800v13.800H.6zM.6 5.200h13.800M.6 9.800h13.800M5.200.6v13.800M9.800.6v13.800" stroke="#fff"/>' )}</div>` ],
				[ 2250, 16, svg( 16, 15, '<path d="M.6.6h14.800v13.800H.6zM4 3.500h8v8.500H4zM5.500 6h5m-5 2h5m-5 2h5"/>', 'stroke="#666"' ) ],
				[ 2290, 16, svg( 16, 15, '<path d="M.6.6h14.800v13.800H.6zM.6 9.500H11V.6M5.500.6v8.900"/>', 'stroke="#666"' ) ],
				[ 2328, 9, svg( 9, 2, '<path d="M0 1h9" stroke="#555" stroke-width="2"/>' ) ],
				[ 2345, 114, '<div class="zoom"><div class="knob"></div></div>' ],
				[ 2468, 9, svg( 9, 9, '<path d="M0 4.500h9M4.500 0v9" stroke="#555" stroke-width="2"/>' ) ],
				[ 2496.5, 36, t( '100%', 36 ) ]
			] )}
		`
	}
}
customElements.define( 'xl-status', XlStatus )

class XlApp extends HTMLElement {
	connectedCallback() {
		this.attachShadow( { mode: 'open' } ).innerHTML = `
			<style>
				:host { display: flex; flex-direction: column; width: 2560px; height: 1440px; }
			</style>
			<xl-titlebar></xl-titlebar>
			<xl-ribbon></xl-ribbon>
			<xl-formula-bar></xl-formula-bar>
			<xl-sheet></xl-sheet>
			<xl-sheet-tabs></xl-sheet-tabs>
			<xl-status></xl-status>
		`
	}
}
customElements.define( 'xl-app', XlApp )
</script>
</body>
</html>
